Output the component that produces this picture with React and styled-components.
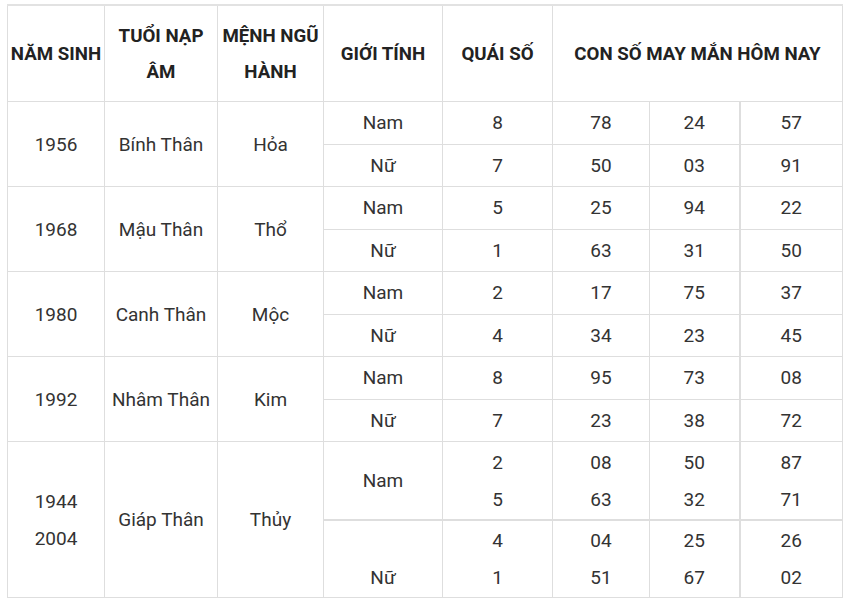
import React from 'react';
import styled, { createGlobalStyle } from 'styled-components';

const GlobalStyle = createGlobalStyle`
  html, body {
    margin: 0;
    padding: 0;
    background: #fff;
  }
  body {
    font-family: Roboto, "Liberation Sans", sans-serif;
  }
`;

const Page = styled.div`
  padding: 4px 0 0 7px;
`;

const Table = styled.table`
  border-collapse: collapse;
  table-layout: fixed;
  width: 835px;
  color: #333;
  font-size: 19px;
  border-top: 2px solid #e2e2e2;
`;

const HeadCell = styled.th`
  height: 95px;
  padding: 0 1px;
  border: 1px solid #dedede;
  font-weight: 700;
  font-size: 18.7px;
  line-height: 36px;
  color: #222;
  text-align: center;
  vertical-align: middle;
  white-space: ${(p) => (p.$nowrap ? 'nowrap' : 'normal')};
`;

const Cell = styled.td`
  height: ${(p) => p.$h || 41.5}px;
  padding: 0 4px;
  border: 1px solid #dedede;
  border-left-width: ${(p) => (p.$thickLeft ? 2 : 1)}px;
  border-top-width: ${(p) => (p.$thickTop ? 2 : 1)}px;
  text-align: center;
  vertical-align: middle;
  line-height: 37px;
  font-weight: 400;
`;

const widths = [97, 113, 106, 119, 110, 97, 90, 103];

const groups = [
  { year: '1956', nap: 'Bính Thân', menh: 'Hỏa', rows: [['Nam', '8', '78', '24', '57'], ['Nữ', '7', '50', '03', '91']] },
  { year: '1968', nap: 'Mậu Thân', menh: 'Thổ', rows: [['Nam', '5', '25', '94', '22'], ['Nữ', '1', '63', '31', '50']] },
  { year: '1980', nap: 'Canh Thân', menh: 'Mộc', rows: [['Nam', '2', '17', '75', '37'], ['Nữ', '4', '34', '23', '45']] },
  { year: '1992', nap: 'Nhâm Thân', menh: 'Kim', rows: [['Nam', '8', '95', '73', '08'], ['Nữ', '7', '23', '38', '72']] },
];

const Lines = ({ items }) =>
  items.map((t, i) => (
    <React.Fragment key={i}>
      {i > 0 && <br />}
      {t || '\u00a0'}
    </React.Fragment>
  ));

export default function App() {
  return (
    <Page>
      <GlobalStyle />
      <Table>
        <colgroup>
          {widths.map((w, i) => (
            <col key={i} style={{ width: w }} />
          ))}
        </colgroup>
        <thead>
          <tr>
            <HeadCell $nowrap>NĂM SINH</HeadCell>
            <HeadCell>TUỔI NẠP ÂM</HeadCell>
            <HeadCell>MỆNH NGŨ HÀNH</HeadCell>
            <HeadCell>GIỚI TÍNH</HeadCell>
            <HeadCell>QUÁI SỐ</HeadCell>
            <HeadCell colSpan={3}>CON SỐ MAY MẮN HÔM NAY</HeadCell>
          </tr>
        </thead>
        <tbody>
          {groups.map((g) =>
            g.rows.map((r, ri) => (
              <tr key={g.year + ri}>
                {ri === 0 && (
                  <>
                    <Cell rowSpan={2}>{g.year}</Cell>
                    <Cell rowSpan={2}>{g.nap}</Cell>
                    <Cell rowSpan={2}>{g.menh}</Cell>
                  </>
                )}
                <Cell>{r[0]}</Cell>
                <Cell>{r[1]}</Cell>
                <Cell>{r[2]}</Cell>
                <Cell>{r[3]}</Cell>
                <Cell $thickLeft>{r[4]}</Cell>
              </tr>
            ))
          )}
          <tr>
            <Cell rowSpan={2}>
              <Lines items={['1944', '2004']} />
            </Cell>
            <Cell rowSpan={2}>Giáp Thân</Cell>
            <Cell rowSpan={2}>Thủy</Cell>
            <Cell $h={77}>Nam</Cell>
            <Cell $h={77}><Lines items={['2', '5']} /></Cell>
            <Cell $h={77}><Lines items={['08', '63']} /></Cell>
            <Cell $h={77}><Lines items={['50', '32']} /></Cell>
            <Cell $h={77} $thickLeft><Lines items={['87', '71']} /></Cell>
          </tr>
          <tr>
            <Cell $h={76} $thickTop><Lines items={['', 'Nữ']} /></Cell>
            <Cell $h={76} $thickTop><Lines items={['4', '1']} /></Cell>
            <Cell $h={76} $thickTop><Lines items={['04', '51']} /></Cell>
            <Cell $h={76} $thickTop><Lines items={['25', '67']} /></Cell>
            <Cell $h={76} $thickTop $thickLeft><Lines items={['26', '02']} /></Cell>
          </tr>
        </tbody>
      </Table>
    </Page>
  );
}
